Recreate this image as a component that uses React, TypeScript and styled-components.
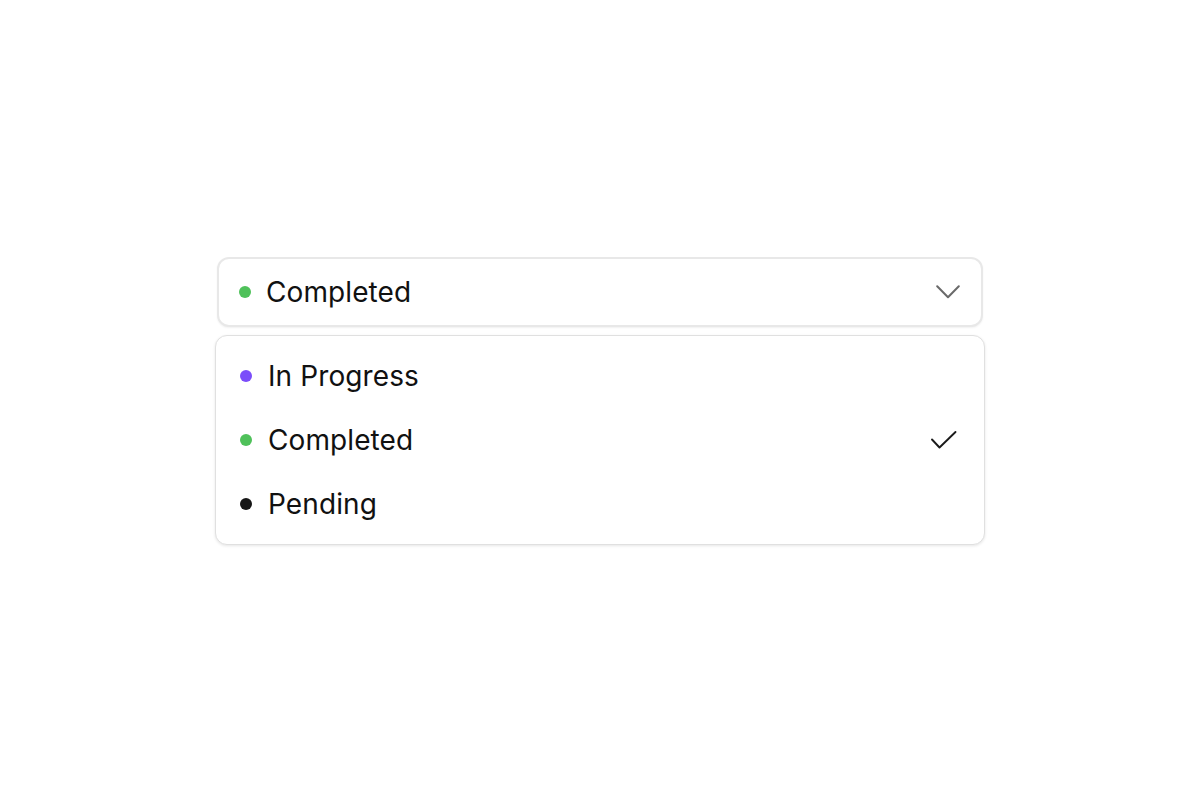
import React, { useState } from "react";
import styled, { createGlobalStyle } from "styled-components";

const GlobalStyle = createGlobalStyle`
    html, body {
        margin: 0;
        padding: 0;
        background: #ffffff;
        font-family: Inter, "Noto Sans", sans-serif;
        color: #111111;
    }
`;

type Status = { label: string; color: string };

const statuses: Status[] = [
    { label: "In Progress", color: "#7b4dfa" },
    { label: "Completed", color: "#4fc15a" },
    { label: "Pending", color: "#161616" },
];

function App() {
    const [selected, setSelected] = useState("Completed");
    const current = statuses.find(s => s.label === selected)!;

    return (
        <>
            <GlobalStyle />
            <Page>
                <Select>
                    <Trigger>
                        <Dot color={current.color} />
                        <TriggerLabel>{current.label}</TriggerLabel>
                        <Chevron width="24" height="14" viewBox="0 0 24 14">
                            <path d="M1.2 1.2 L12 12.2 L22.8 1.2" fill="none" stroke="#6a6a6a" strokeWidth="2" strokeLinecap="round" strokeLinejoin="round" />
                        </Chevron>
                    </Trigger>
                    <Menu>
                        {statuses.map(s => (
                            <Option key={s.label} onClick={() => setSelected(s.label)}>
                                <Dot color={s.color} />
                                <OptionLabel>{s.label}</OptionLabel>
                                {s.label === selected && (
                                    <svg width="28" height="20" viewBox="0 0 28 20">
                                        <path d="M2 9.5 L9.5 17.5 L25.5 2" fill="none" stroke="#1a1a1a" strokeWidth="1.9" strokeLinecap="round" strokeLinejoin="round" />
                                    </svg>
                                )}
                            </Option>
                        ))}
                    </Menu>
                </Select>
            </Page>
        </>
    );
}

export default App;

const Page = styled.div`
    width: 1200px;
    height: 800px;
    display: flex;
    justify-content: center;
    padding-top: 257px;
    box-sizing: border-box;
`;

const Select = styled.div`
    width: 770px;
    display: flex;
    flex-direction: column;
    align-items: center;
    gap: 8px;
`;

const Trigger = styled.div`
    width: 766px;
    height: 70px;
    box-sizing: border-box;
    display: flex;
    align-items: center;
    padding: 0 21px 0 20px;
    border: 2px solid #e8e8e8;
    border-radius: 12px;
    box-shadow: 0 1px 2px rgba(0, 0, 0, 0.06);
    background: #fff;
`;

const Dot = styled.span<{ color: string }>`
    width: 12px;
    height: 12px;
    border-radius: 50%;
    background: ${p => p.color};
    flex-shrink: 0;
`;

const TriggerLabel = styled.span`
    flex: 1;
    margin-left: 15px;
    font-size: 28px;
    letter-spacing: 0.1px;
`;

const Chevron = styled.svg`
    flex-shrink: 0;
`;

const Menu = styled.div`
    width: 770px;
    box-sizing: border-box;
    padding: 8px 0;
    border: 1.5px solid #e0e0e0;
    border-radius: 12px;
    box-shadow: 0 1px 3px rgba(0, 0, 0, 0.1);
    background: #fff;
    display: flex;
    flex-direction: column;
`;

const Option = styled.div`
    height: 64px;
    display: flex;
    align-items: center;
    padding: 0 26px 0 24px;
    cursor: pointer;
`;

const OptionLabel = styled.span`
    flex: 1;
    margin-left: 16px;
    font-size: 28px;
    letter-spacing: 0.1px;
`;
